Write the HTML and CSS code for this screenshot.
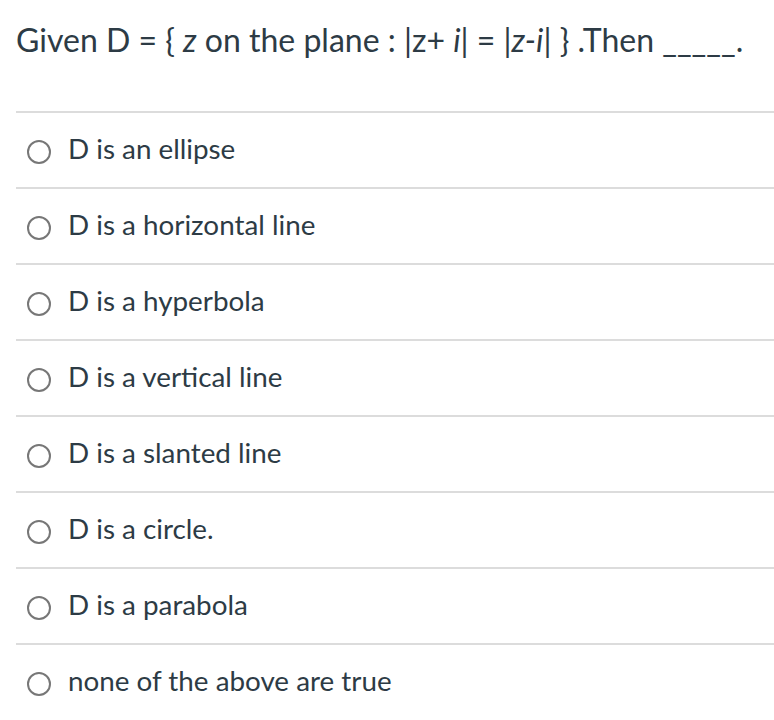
FILE: index.html
```html
<!DOCTYPE html>
<html>
<head>
<meta charset="utf-8">
<link rel="stylesheet" href="styles.css">
</head>
<body>
<div class="quiz">
  <div class="question">Given D = { <i>z</i> on the plane : |z+ <i>i</i>| = |<i>z-i</i>| } .Then _____.</div>
  <div class="answers">
    <div class="answer"><span class="radio"></span><span class="label">D is an ellipse</span></div>
    <div class="answer"><span class="radio"></span><span class="label">D is a horizontal line</span></div>
    <div class="answer"><span class="radio"></span><span class="label">D is a hyperbola</span></div>
    <div class="answer"><span class="radio"></span><span class="label">D is a vertical line</span></div>
    <div class="answer"><span class="radio"></span><span class="label">D is a slanted line</span></div>
    <div class="answer"><span class="radio"></span><span class="label">D is a circle.</span></div>
    <div class="answer"><span class="radio"></span><span class="label">D is a parabola</span></div>
    <div class="answer"><span class="radio"></span><span class="label">none of the above are true</span></div>
  </div>
</div>
</body>
</html>
```
FILE: styles.css
```css
html, body {
  margin: 0;
  padding: 0;
  background: #ffffff;
}
body {
  font-family: Lato, "Liberation Sans", sans-serif;
  color: #2d3b45;
}
.quiz {
  margin-left: 16px;
}
.question {
  font-size: 32px;
  line-height: 40px;
  padding-top: 20px;
  margin-bottom: 51px;
  white-space: nowrap;
}
.answers {
  display: flex;
  flex-direction: column;
}
.answer {
  display: flex;
  align-items: center;
  height: 74px;
  border-top: 2px solid #dcdcdc;
  font-size: 27.8px;
}
.radio {
  box-sizing: border-box;
  width: 24px;
  height: 24px;
  border: 2px solid #777777;
  border-radius: 50%;
  margin-left: 11px;
  margin-right: 17px;
  margin-top: 3px;
  flex-shrink: 0;
}
.label {
  line-height: 30px;
  margin-top: -3px;
}
```
